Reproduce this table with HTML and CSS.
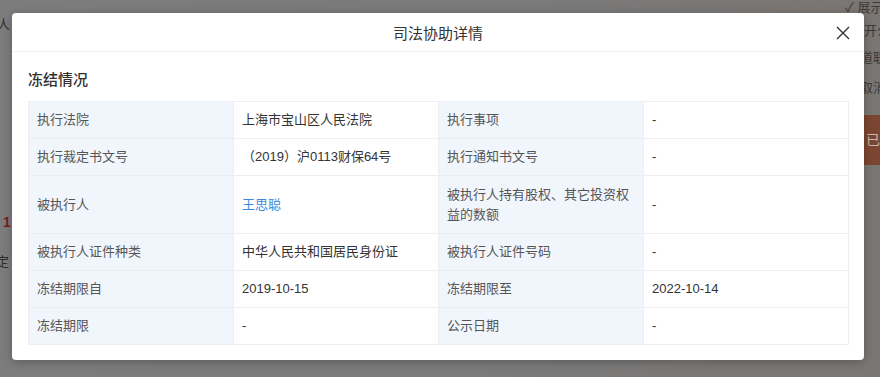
FILE: index.html
```html
<!DOCTYPE html>
<html lang="zh-CN">
<head>
<meta charset="utf-8">
<title>司法协助详情</title>
<link rel="stylesheet" href="styles.css">
</head>
<body>
<div class="backdrop">
  <span class="bg-txt bg-ren">人</span>
  <span class="bg-txt bg-one">1</span>
  <span class="bg-txt bg-ding">定</span>
  <span class="bg-txt bg-show">✓ 展示</span>
  <span class="bg-txt bg-r1">开公</span>
  <span class="bg-txt bg-r2">道联</span>
  <span class="bg-txt bg-r3">取消</span>
  <span class="bg-btn">已联</span>
</div>
<div class="modal">
  <div class="modal-header">
    <div class="modal-title">司法协助详情</div>
    <svg class="close" width="16" height="16" viewBox="0 0 16 16"><path d="M2 2L14 14M14 2L2 14" stroke="#333" stroke-width="1.4" fill="none"/></svg>
  </div>
  <div class="modal-body">
    <div class="section-title">冻结情况</div>
    <table class="info">
      <tr><td class="lb">执行法院</td><td class="vl">上海市宝山区人民法院</td><td class="lb">执行事项</td><td class="vl">-</td></tr>
      <tr><td class="lb">执行裁定书文号</td><td class="vl">（2019）沪0113财保64号</td><td class="lb">执行通知书文号</td><td class="vl">-</td></tr>
      <tr class="tall"><td class="lb">被执行人</td><td class="vl"><a class="link">王思聪</a></td><td class="lb">被执行人持有股权、其它投资权益的数额</td><td class="vl">-</td></tr>
      <tr><td class="lb">被执行人证件种类</td><td class="vl">中华人民共和国居民身份证</td><td class="lb">被执行人证件号码</td><td class="vl">-</td></tr>
      <tr><td class="lb">冻结期限自</td><td class="vl">2019-10-15</td><td class="lb">冻结期限至</td><td class="vl">2022-10-14</td></tr>
      <tr><td class="lb">冻结期限</td><td class="vl">-</td><td class="lb">公示日期</td><td class="vl">-</td></tr>
    </table>
  </div>
</div>
</body>
</html>
```

FILE: styles.css
```css
html, body {
  margin: 0;
  padding: 0;
  width: 880px;
  height: 377px;
  overflow: hidden;
}
body {
  background: #7a7a7a;
  font-family: "Liberation Sans", "Noto Sans CJK SC", sans-serif;
  color: #333;
  position: relative;
}
.backdrop {
  position: absolute;
  inset: 0;
  background: linear-gradient(to right, #7c7c7c 0%, #7a7a7a 60%, #7a7673 100%);
}
.bg-txt {
  position: absolute;
  font-size: 13px;
  color: #2e2e2e;
  line-height: 16px;
  white-space: nowrap;
}
.bg-ren { left: -3px; top: 17px; }
.bg-one { left: 3px; top: 214px; color: #7a1d1d; font-weight: bold; font-size: 14px; }
.bg-ding { left: -4px; top: 254px; }
.bg-show { left: 845px; top: 0px; color: #3a3a3a; }
.bg-r1 { left: 864px; top: 23px; color: #3a3a3a; }
.bg-r2 { left: 860px; top: 50px; color: #3a3a3a; }
.bg-r3 { left: 860px; top: 80px; color: #3a3a3a; }
.bg-btn {
  position: absolute;
  left: 862px;
  top: 115px;
  width: 30px;
  height: 50px;
  background: #7b4631;
  color: #c9b9b0;
  font-size: 14px;
  line-height: 50px;
  padding-left: 4px;
  box-sizing: border-box;
  overflow: hidden;
  white-space: nowrap;
}
.modal {
  position: absolute;
  left: 12px;
  top: 13px;
  width: 852px;
  height: 347px;
  background: #fff;
  border-radius: 4px;
  box-shadow: 0 2px 10px rgba(0,0,0,0.25);
  box-sizing: border-box;
}
.modal-header {
  height: 38px;
  border-bottom: 1px solid #f0f0f0;
  display: flex;
  align-items: center;
  justify-content: center;
  position: relative;
}
.modal-title {
  font-size: 15px;
  color: #333;
  font-family: "Noto Sans CJK SC", sans-serif;
  padding-top: 1px;
}
.close {
  position: absolute;
  right: 13px;
  top: 12px;
}
.modal-body {
  padding: 17px 16px 0 16px;
}
.section-title {
  font-size: 15px;
  line-height: 20px;
  color: #333;
  font-weight: 500;
  font-family: "Noto Sans CJK SC", sans-serif;
  margin-bottom: 12px;
}
.info {
  width: 821px;
  border-collapse: collapse;
  table-layout: fixed;
  font-size: 13px;
}
.info td {
  border: 1px solid #eceef2;
  height: 37px;
  padding: 0 8px;
  box-sizing: border-box;
  vertical-align: middle;
  line-height: 20px;
}
.info tr.tall td { height: 58px; }
.info td.lb {
  background: #f1f6fd;
  color: #555;
  width: 205px;
}
.info td.vl {
  background: #fff;
  color: #333;
  width: 205px;
}
.link {
  color: #3a8be0;
  text-decoration: none;
}
```
